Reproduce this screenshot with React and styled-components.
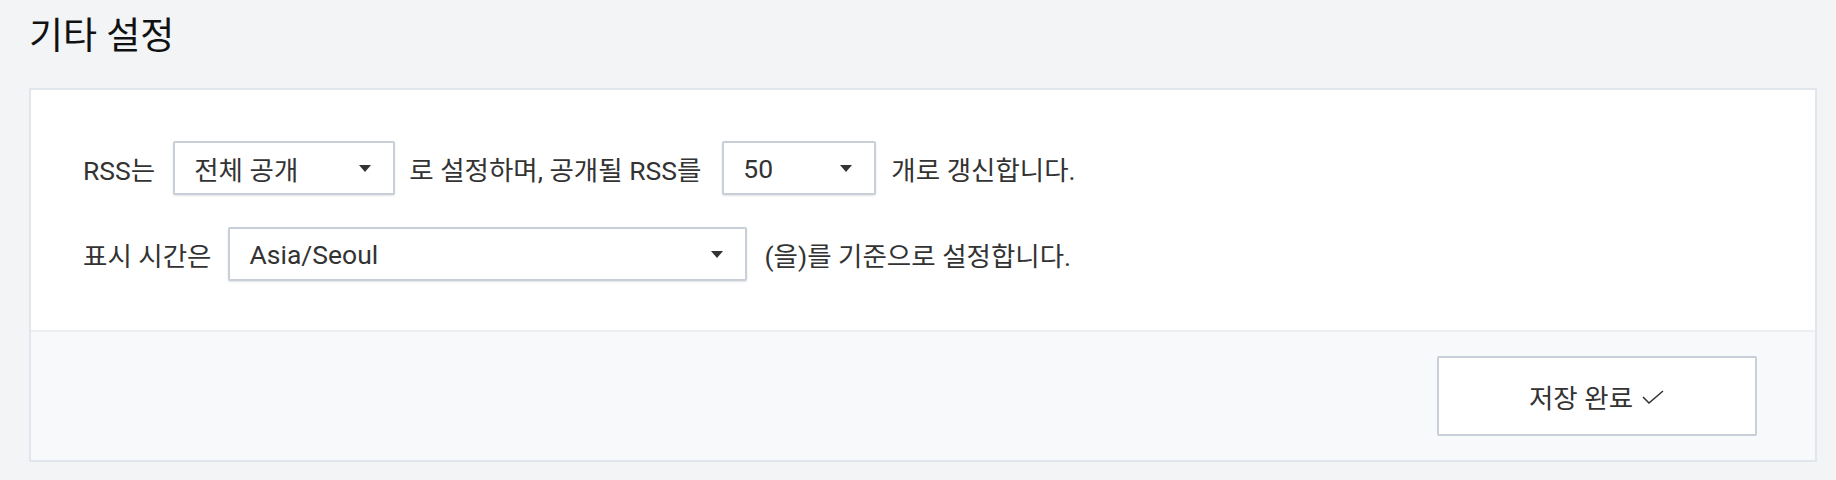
import styled, { createGlobalStyle } from "styled-components";

const GlobalStyle = createGlobalStyle`
  html, body {
    margin: 0;
    padding: 0;
    background: #f3f4f6;
  }
  body {
    font-family: Roboto, "Noto Sans CJK KR", sans-serif;
    color: #333;
  }
`;

const Page = styled.div`
  width: 1836px;
  height: 480px;
  box-sizing: border-box;
  padding: 12px 19px 18px 29px;
  background: #f3f4f6;
  overflow: hidden;
`;

const Title = styled.h2`
  margin: 0 0 26px 0;
  font-size: 37px;
  line-height: 50px;
  font-weight: 400;
  color: #111;
`;

const Card = styled.section`
  border: 2px solid #e1e5ec;
  background: #fff;
`;

const Body = styled.div`
  display: flex;
  flex-direction: column;
  gap: 32px;
  padding: 51px 50px 49px 52px;
`;

const Row = styled.div`
  display: flex;
  align-items: center;
  height: 54px;
  font-size: 26.5px;
  color: #333;
  white-space: nowrap;
`;

const Select = styled.div`
  display: flex;
  align-items: center;
  justify-content: space-between;
  box-sizing: border-box;
  width: ${(p) => p.$width}px;
  height: 54px;
  margin: 0 ${(p) => p.$after}px 0 ${(p) => p.$before}px;
  padding: 0 22px 0 19px;
  border: 2px solid #c9cfd9;
  border-radius: 2px;
  background: #fff;
  box-shadow: 0 1px 2px rgba(60, 70, 90, 0.15);
  font-size: 26.5px;
  color: #333;
  cursor: pointer;
`;

const Caret = styled.span`
  width: 0;
  height: 0;
  border-left: 6px solid transparent;
  border-right: 6px solid transparent;
  border-top: 7px solid #333;
`;

const Footer = styled.div`
  display: flex;
  justify-content: flex-end;
  padding: 24px 58px;
  border-top: 2px solid #eeeff3;
  background: #f8f9fb;
`;

const SaveButton = styled.button`
  display: flex;
  align-items: center;
  justify-content: center;
  gap: 8px;
  width: 320px;
  height: 80px;
  border: 2px solid #c9cfd9;
  border-radius: 2px;
  background: #fff;
  font-family: Roboto, "Noto Sans CJK KR", sans-serif;
  font-size: 26.5px;
  color: #333;
  cursor: pointer;
  svg {
    margin-top: 2px;
  }
`;

const Dropdown = ({ value, width, before = 18, after = 14 }) => (
  <Select $width={width} $before={before} $after={after}>
    <span>{value}</span>
    <Caret />
  </Select>
);

const App = () => {
  return (
    <Page>
      <GlobalStyle />
      <Title>기타 설정</Title>
      <Card>
        <Body>
          <Row>
            <span>RSS는</span>
            <Dropdown value="전체 공개" width={222} />
            <span>로 설정하며, 공개될 RSS를</span>
            <Dropdown value="50" width={154} before={21} after={15} />
            <span>개로 갱신합니다.</span>
          </Row>
          <Row>
            <span>표시 시간은</span>
            <Dropdown value="Asia/Seoul" width={519} before={17} after={17} />
            <span>(을)를 기준으로 설정합니다.</span>
          </Row>
        </Body>
        <Footer>
          <SaveButton type="button">
            저장 완료
            <svg width="24" height="18" viewBox="0 0 24 18">
              <polyline
                points="2,9 8,15 22,3"
                fill="none"
                stroke="#333"
                strokeWidth="1.6"
              />
            </svg>
          </SaveButton>
        </Footer>
      </Card>
    </Page>
  );
};

export default App;
